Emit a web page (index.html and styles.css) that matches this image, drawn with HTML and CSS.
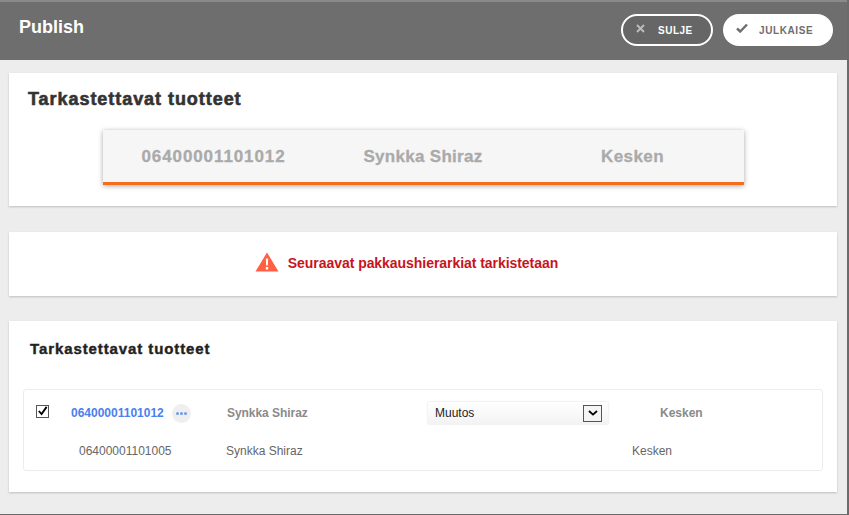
FILE: index.html
```html
<!doctype html>
<html>
<head>
	<meta charset="UTF-8">
	<title>Publish</title>
	<link rel="stylesheet" href="styles.css">
</head>
<body>
	<div class="dialog">
		<header class="top">
			<h1>Publish</h1>
			<div class="actions">
				<button class="btn btn-close">
					<svg width="9" height="9" viewBox="0 0 9 9"><path d="M1 1l7 7M8 1L1 8" stroke="#bdbdbd" stroke-width="1.8" fill="none"/></svg>
					<span>SULJE</span>
				</button>
				<button class="btn btn-publish">
					<svg width="12" height="10" viewBox="0 0 12 10"><path d="M1 5.5l3.2 3L11 1.5" stroke="#6e6e6e" stroke-width="2.4" fill="none"/></svg>
					<span>JULKAISE</span>
				</button>
			</div>
		</header>

		<section class="card card-summary">
			<h2 class="big-title">Tarkastettavat tuotteet</h2>
			<div class="summary">
				<span class="sum-code">06400001101012</span>
				<span class="sum-name">Synkka Shiraz</span>
				<span class="sum-status">Kesken</span>
			</div>
		</section>

		<section class="card card-warning">
			<svg width="24" height="20" viewBox="0 0 24 20"><path d="M12 .5L23.5 19.5H.5z" fill="#ff5f43"/><path d="M10.8 6.5h2.4l-.4 7h-1.6zM10.8 15h2.4v2.4h-2.4z" fill="#fff"/></svg>
			<p>Seuraavat pakkaushierarkiat tarkistetaan</p>
		</section>

		<section class="card card-list">
			<h2 class="small-title">Tarkastettavat tuotteet</h2>
			<div class="tree">
				<div class="row row-parent">
					<span class="check">
						<svg width="12" height="12" viewBox="0 0 12 12"><path d="M2 6l3 3.4L10.5 1.5" stroke="#000" stroke-width="2" fill="none"/></svg>
					</span>
					<a class="code" href="#">06400001101012</a>
					<span class="more"><i></i><i></i><i></i></span>
					<span class="name">Synkka Shiraz</span>
					<div class="select">
						<span>Muutos</span>
						<span class="select-arrow">
							<svg width="10" height="6" viewBox="0 0 10 6"><path d="M1 1l4 3.6L9 1" stroke="#000" stroke-width="1.8" fill="none"/></svg>
						</span>
					</div>
					<span class="status">Kesken</span>
				</div>
				<div class="row row-child">
					<span class="child-code">06400001101005</span>
					<span class="child-name">Synkka Shiraz</span>
					<span class="child-status">Kesken</span>
				</div>
			</div>
		</section>
	</div>
</body>
</html>
```
FILE: styles.css
```css
* {
    box-sizing: border-box;
}
html, body {
    height: 100%;
}
body {
    margin: 0;
    background-color: #ededed;
    font-family: "Liberation Sans", Arial, sans-serif;
    overflow: hidden;
}

.dialog {
    height: 515px;
    border-right: 2px solid #6b6b6b;
    border-bottom: 1px solid #6b6b6b;
}

.top {
    height: 60px;
    background-color: #6e6e6e;
    border-top: 2px solid #8a8a8a;
    padding: 12px 14px 0 19px;
    display: flex;
    justify-content: space-between;
    align-items: flex-start;
}
.top h1 {
    margin: 3px 0 0 0;
    color: #fff;
    font-size: 18px;
    line-height: 21px;
}
.actions {
    display: flex;
    gap: 10px;
}
.btn {
    height: 32px;
    border-radius: 16px;
    display: flex;
    align-items: center;
    font-family: inherit;
    font-size: 10px;
    font-weight: bold;
    letter-spacing: 0.5px;
    padding: 0;
}
.btn svg {
    margin-top: -4px;
}
.btn-close {
    width: 92px;
    background-color: #666;
    border: 2px solid #fff;
    color: #fff;
    padding-left: 13px;
}
.btn-close span {
    margin-left: 13px;
}
.btn-publish {
    width: 110px;
    background-color: #fff;
    border: none;
    color: #6e6e6e;
    padding-left: 13px;
}
.btn-publish span {
    margin-left: 11px;
    letter-spacing: 0.6px;
}

.card {
    width: 828px;
    margin-left: 9px;
    background-color: #fff;
    box-shadow: 0 1px 2px rgba(0, 0, 0, 0.2);
}

.card-summary {
    margin-top: 13px;
    height: 133px;
    padding: 16px 19px 0 19px;
}
.big-title {
    margin: 0;
    font-size: 18px;
    line-height: 20px;
    color: #333;
    letter-spacing: 0.95px;
    -webkit-text-stroke: 0.6px #333;
}
.summary {
    margin: 21px auto 0 auto;
    width: 641px;
    height: 55px;
    background-color: #f6f6f6;
    border-bottom: 3px solid #f76b1c;
    box-shadow: 0 1px 5px rgba(0, 0, 0, 0.35);
    display: grid;
    grid-template-columns: 222px 197px 222px;
    align-items: center;
    color: #aaa;
    font-size: 17px;
    font-weight: bold;
    text-align: center;
    padding-top: 2px;
    -webkit-text-stroke: 0.3px #aaa;
}
.sum-code {
    letter-spacing: 0.9px;
}
.sum-name {
    letter-spacing: 0.3px;
}
.sum-status {
    letter-spacing: 0.4px;
}

.card-warning {
    margin-top: 26px;
    height: 64px;
    display: flex;
    align-items: center;
    justify-content: center;
    gap: 9px;
    padding-right: 33px;
}
.card-warning svg {
    margin-bottom: 4px;
}
.card-warning p {
    margin: 0 0 2px 0;
    color: #c8141c;
    font-size: 14px;
    font-weight: bold;
    letter-spacing: -0.05px;
}

.card-list {
    margin-top: 25px;
    height: 171px;
    padding: 20px 14px 0 14px;
}
.small-title {
    margin: 0 0 0 7px;
    font-size: 15px;
    line-height: 16px;
    color: #222;
    letter-spacing: 0.9px;
    -webkit-text-stroke: 0.4px #222;
}
.tree {
    margin-top: 32px;
    height: 82px;
    border: 1px solid #ececec;
    border-radius: 3px;
}
.row {
    display: flex;
    align-items: center;
}
.row-parent {
    height: 46px;
    padding-left: 12px;
}
.row-child {
    height: 30px;
    padding-left: 55px;
    font-size: 12px;
    color: #666;
}
.check {
    width: 13px;
    height: 13px;
    border: 1px solid #555;
    background-color: #fff;
    margin-top: -4px;
    display: flex;
    align-items: center;
    justify-content: center;
}
.code {
    margin-left: 22px;
    width: 93px;
    color: #4a80f0;
    font-size: 12px;
    font-weight: bold;
    text-decoration: none;
}
.more {
    margin-left: 8px;
    width: 19px;
    height: 19px;
    border-radius: 50%;
    background-color: #efefef;
    display: flex;
    align-items: center;
    justify-content: center;
    gap: 1px;
}
.more i {
    width: 3px;
    height: 3px;
    border-radius: 50%;
    background-color: #6a9cf0;
}
.name {
    margin-left: 36px;
    width: 201px;
    color: #8a8a8a;
    font-size: 12px;
    font-weight: bold;
    letter-spacing: -0.05px;
}
.select {
    width: 180px;
    height: 22px;
    background: linear-gradient(#fff, #f3f3f3);
    box-shadow: 0 0 2px rgba(0, 0, 0, 0.15);
    display: flex;
    align-items: center;
    justify-content: space-between;
    padding: 0 6px 0 7px;
    font-size: 12px;
    color: #222;
}
.select-arrow {
    width: 19px;
    height: 17px;
    border: 1px solid #555;
    background-color: #f4f4f4;
    display: flex;
    align-items: center;
    justify-content: center;
}
.status {
    margin-left: 52px;
    color: #8a8a8a;
    font-size: 12px;
    font-weight: bold;
}
.child-code {
    width: 147px;
}
.child-name {
    width: 406px;
}
```
